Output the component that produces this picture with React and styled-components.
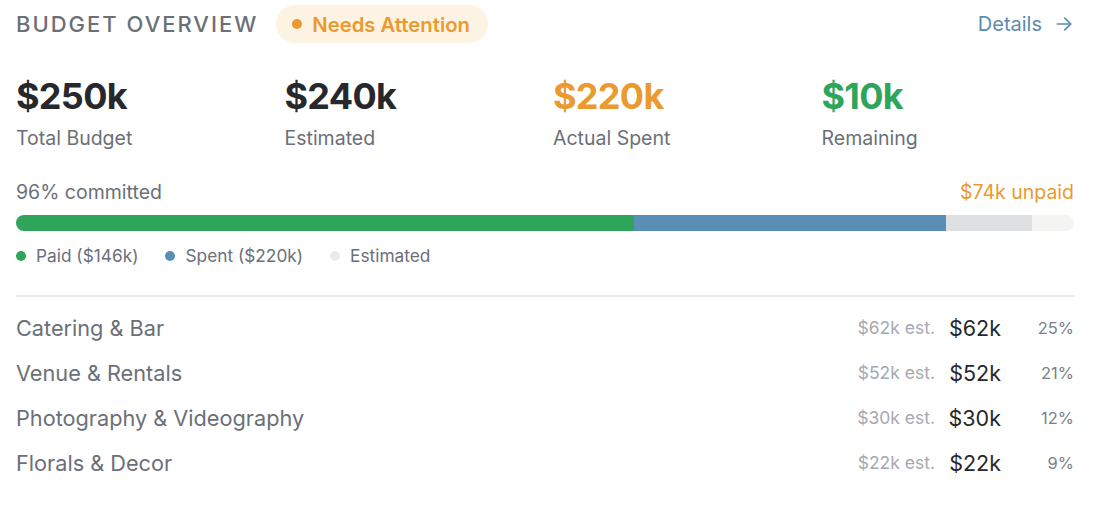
import styled, { createGlobalStyle } from 'styled-components'

const GlobalStyle = createGlobalStyle`
  body {
    margin: 0;
    background: #ffffff;
    font-family: Inter, "Noto Sans", sans-serif;
  }
`

const Card = styled.div`
  width: 1058px;
  padding: 5px 24px 0 16px;
  display: flex;
  flex-direction: column;
`
const Header = styled.div`
  display: flex;
  align-items: center;
  justify-content: space-between;
  height: 38px;
`
const TitleGroup = styled.div`
  display: flex;
  align-items: center;
  gap: 18px;
`
const Title = styled.div`
  font-size: 22px;
  font-weight: 500;
  letter-spacing: 2px;
  color: #6b6f78;
`
const Badge = styled.div`
  display: flex;
  align-items: center;
  gap: 10px;
  height: 38px;
  padding: 0 18px 0 16px;
  border-radius: 19px;
  background: #fdf3e2;
  color: #ea9a2e;
  font-size: 20.3px;
  font-weight: 600;
`
const Dot = styled.span`
  width: ${p => p.size || 10}px;
  height: ${p => p.size || 10}px;
  border-radius: 50%;
  background: ${p => p.color};
  flex-shrink: 0;
`
const DetailsLink = styled.a`
  display: flex;
  align-items: center;
  gap: 12px;
  margin-right: 0;
  font-size: 20px;
  color: #5b8bad;
  text-decoration: none;
  cursor: pointer;
`
const Stats = styled.div`
  display: grid;
  grid-template-columns: repeat(4, 1fr);
  gap: 16px;
  margin-top: 33px;
`
const Stat = styled.div`
  display: flex;
  flex-direction: column;
  gap: 10px;
`
const StatValue = styled.div`
  font-size: 36px;
  font-weight: 700;
  line-height: 40px;
  color: ${p => p.color || '#26282d'};
  letter-spacing: -0.7px;
`
const StatLabel = styled.div`
  font-size: 19.5px;
  color: #6b6f78;
  line-height: 24px;
`
const CommitRow = styled.div`
  display: flex;
  justify-content: space-between;
  margin-top: 30px;
  font-size: 19.5px;
  line-height: 24px;
  color: #6b6f78;
`
const Unpaid = styled.span`
  color: #ea9a2e;
`
const Bar = styled.div`
  display: flex;
  height: 16px;
  margin-top: 11px;
  border-radius: 8px;
  overflow: hidden;
  background: #f4f4f2;
`
const Segment = styled.div`
  height: 100%;
  background: ${p => p.color};
`
const Legend = styled.div`
  display: flex;
  gap: 27px;
  margin-top: 13px;
`
const LegendItem = styled.div`
  display: flex;
  align-items: center;
  gap: 10px;
  font-size: 17.3px;
  line-height: 24px;
  color: #6b6f78;
`
const Divider = styled.div`
  height: 2px;
  background: #ebebe9;
  margin-top: 27px;
`
const List = styled.div`
  display: flex;
  flex-direction: column;
  margin-top: 8px;
`
const Row = styled.div`
  display: flex;
  align-items: center;
  height: 45px;
`
const Category = styled.div`
  flex: 1;
  font-size: 21.7px;
  color: #6b6f78;
`
const Est = styled.div`
  font-size: 17.5px;
  color: #a6a9b0;
`
const Amount = styled.div`
  width: 62px;
  margin-left: 4px;
  text-align: right;
  font-size: 21.5px;
  color: #26282d;
`
const Pct = styled.div`
  width: 73px;
  text-align: right;
  font-size: 16.5px;
  color: #7b7f87;
`

const stats = [
  { value: '$250k', label: 'Total Budget' },
  { value: '$240k', label: 'Estimated' },
  { value: '$220k', label: 'Actual Spent', color: '#ea9a2e' },
  { value: '$10k', label: 'Remaining', color: '#2ea55a' }
]

const segments = [
  { pct: 58.4, color: '#2ea55a' },
  { pct: 29.5, color: '#5a8eb4' },
  { pct: 8.1, color: '#dfe0e1' }
]

const categories = [
  { name: 'Catering & Bar', est: '$62k', amount: '$62k', pct: '25%' },
  { name: 'Venue & Rentals', est: '$52k', amount: '$52k', pct: '21%' },
  { name: 'Photography & Videography', est: '$30k', amount: '$30k', pct: '12%' },
  { name: 'Florals & Decor', est: '$22k', amount: '$22k', pct: '9%' }
]

const ArrowRight = () => (
  <svg width="20" height="20" viewBox="0 0 24 24" fill="none" stroke="currentColor" strokeWidth="2" strokeLinecap="round" strokeLinejoin="round">
    <path d="M4 12h16" />
    <path d="M13 5l7 7-7 7" />
  </svg>
)

const App = () => (
  <>
    <GlobalStyle />
    <Card>
      <Header>
        <TitleGroup>
          <Title>BUDGET OVERVIEW</Title>
          <Badge>
            <Dot color="#ea9a2e" />
            Needs Attention
          </Badge>
        </TitleGroup>
        <DetailsLink>
          Details
          <ArrowRight />
        </DetailsLink>
      </Header>

      <Stats>
        {stats.map(s => (
          <Stat key={s.label}>
            <StatValue color={s.color}>{s.value}</StatValue>
            <StatLabel>{s.label}</StatLabel>
          </Stat>
        ))}
      </Stats>

      <CommitRow>
        <span>96% committed</span>
        <Unpaid>$74k unpaid</Unpaid>
      </CommitRow>
      <Bar>
        {segments.map(s => (
          <Segment key={s.color} color={s.color} style={{ width: `${s.pct}%` }} />
        ))}
      </Bar>
      <Legend>
        <LegendItem><Dot color="#2ea55a" />Paid ($146k)</LegendItem>
        <LegendItem><Dot color="#5a8eb4" />Spent ($220k)</LegendItem>
        <LegendItem><Dot color="#ebebeb" />Estimated</LegendItem>
      </Legend>

      <Divider />

      <List>
        {categories.map(c => (
          <Row key={c.name}>
            <Category>{c.name}</Category>
            <Est>{c.est} est.</Est>
            <Amount>{c.amount}</Amount>
            <Pct>{c.pct}</Pct>
          </Row>
        ))}
      </List>
    </Card>
  </>
)

export default App
